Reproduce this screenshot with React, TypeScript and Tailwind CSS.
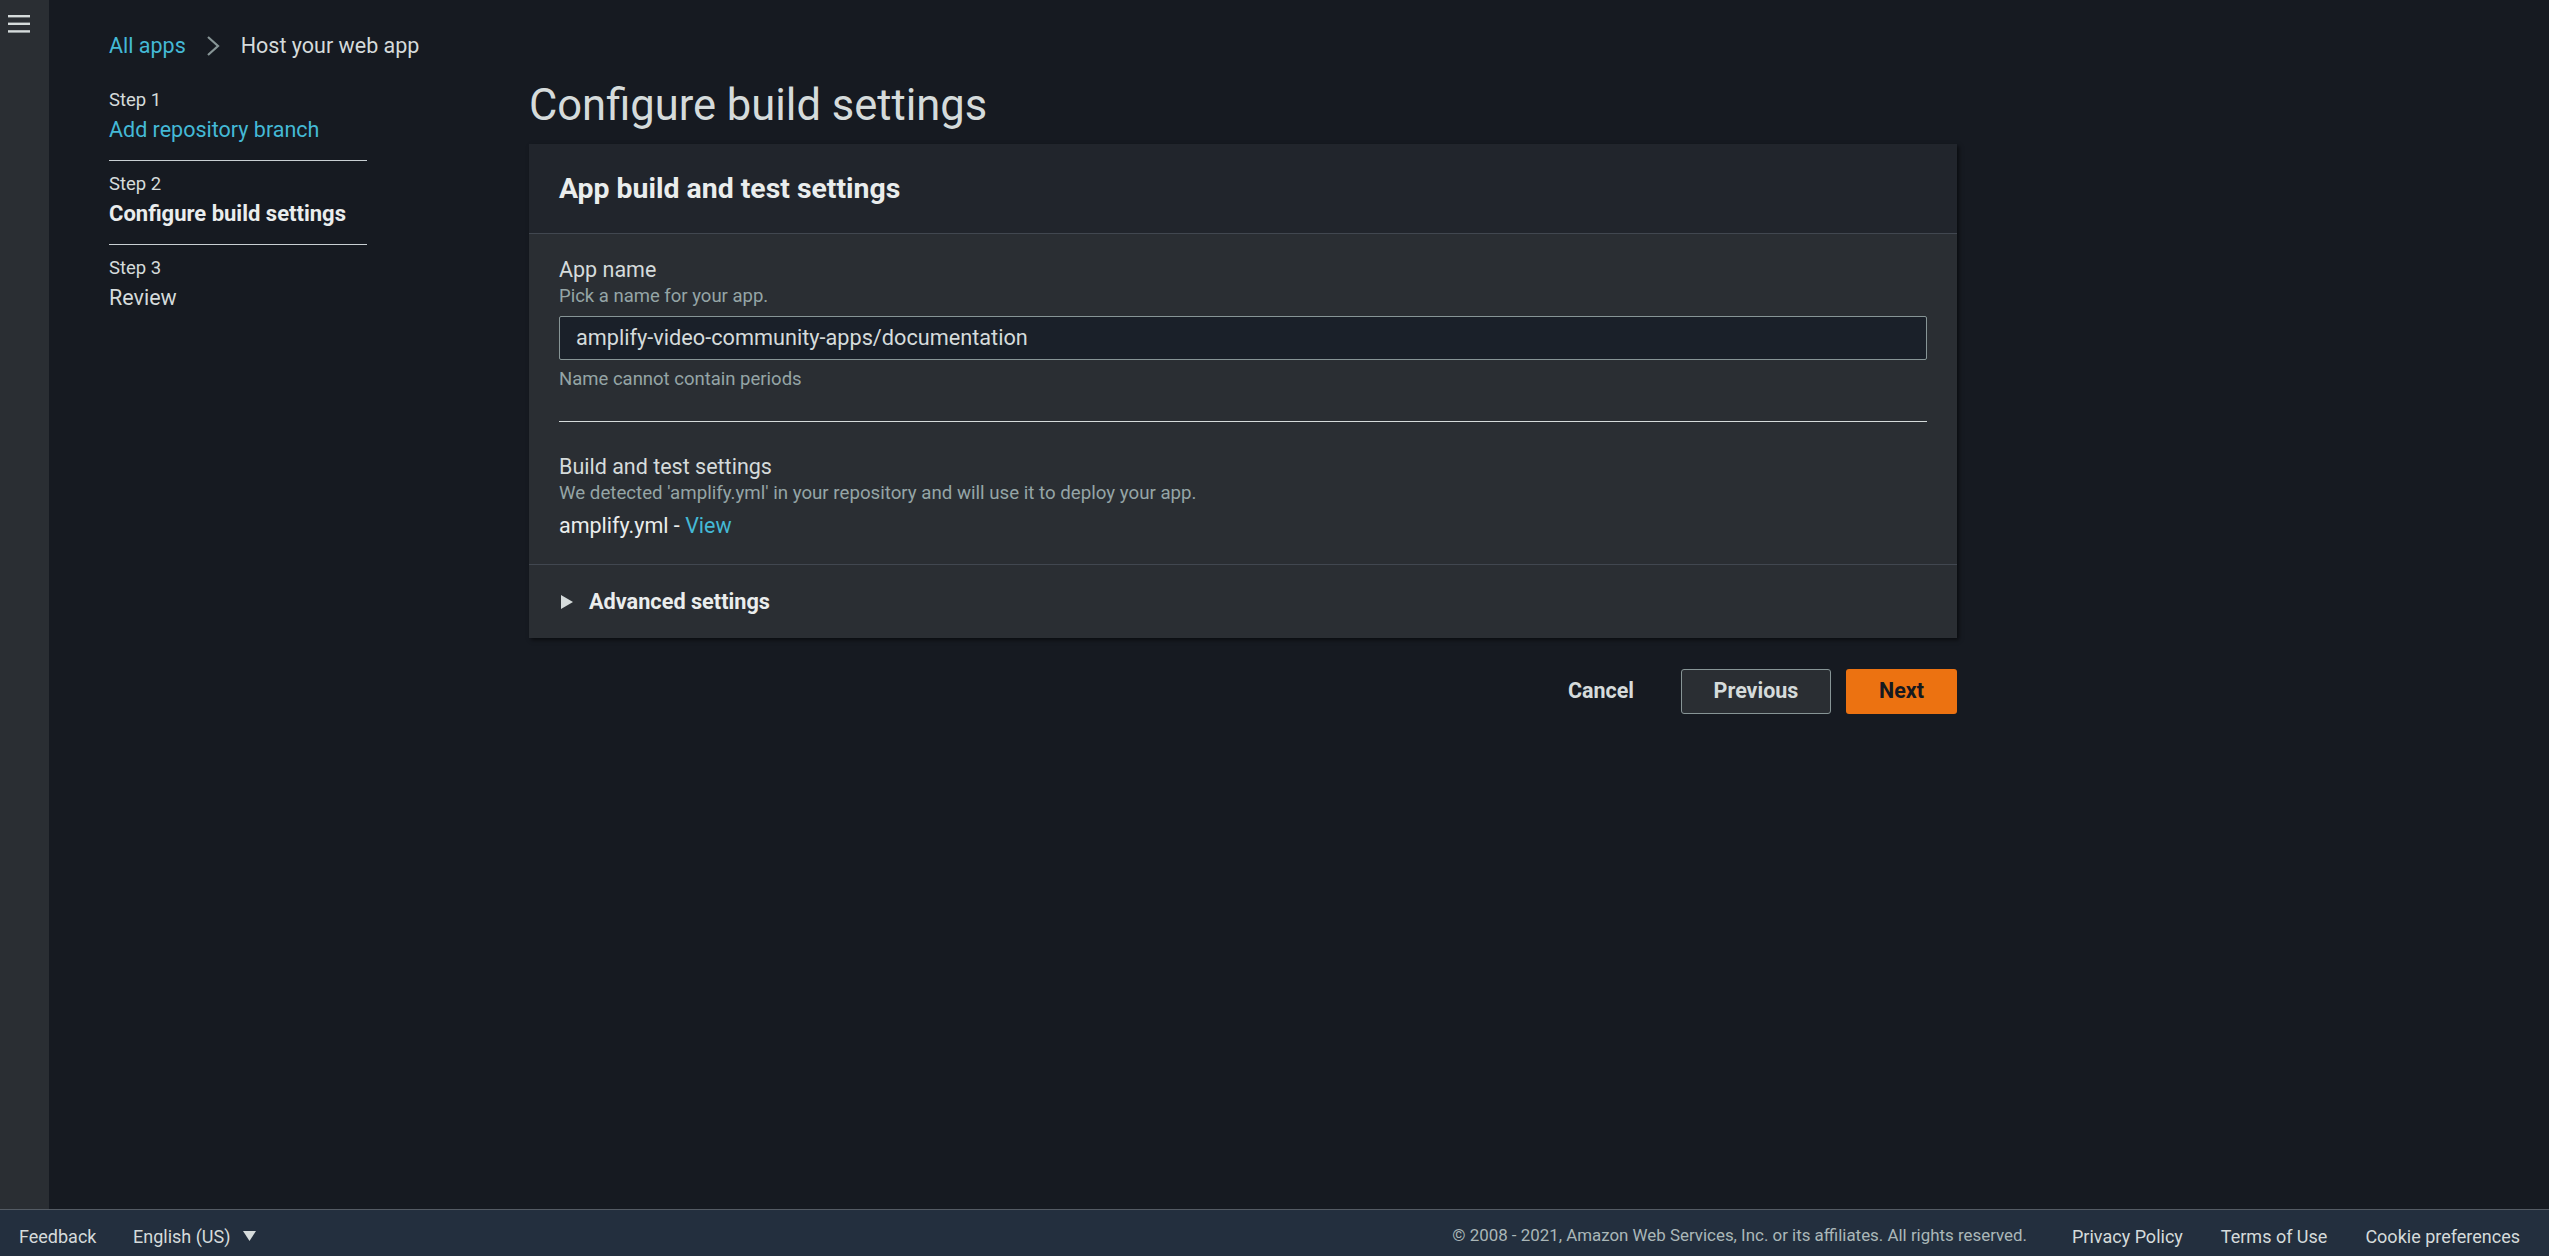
import React from "react";

function Hamburger() {
  return (
    <svg width="22" height="19" viewBox="0 0 22 19" className="block">
      <rect x="0" y="0" width="22" height="2.4" fill="#d5dbdb" />
      <rect x="0" y="7.6" width="22" height="2.4" fill="#d5dbdb" />
      <rect x="0" y="15.2" width="22" height="2.4" fill="#d5dbdb" />
    </svg>
  );
}

function Chevron() {
  return (
    <svg width="14" height="22" viewBox="0 0 14 22" className="block">
      <polyline points="2,2 12,11 2,20" fill="none" stroke="#879596" strokeWidth="2.2" />
    </svg>
  );
}

function StepItem({
  label,
  title,
  kind,
  border,
}: {
  label: string;
  title: string;
  kind: "link" | "active" | "plain";
  border: boolean;
}) {
  return (
    <li className={"pt-[8px] pb-[15px] " + (border ? "border-b border-[#c9cfd3]" : "")}>
      <div className="text-[18.5px] leading-[30px] text-[#d5dbdb]">{label}</div>
      {kind === "link" && (
        <a className="block text-[21.5px] leading-[30px] text-[#44b9d6]">{title}</a>
      )}
      {kind === "active" && (
        <div className="text-[22px] font-bold leading-[30px] text-[#eaeded]">{title}</div>
      )}
      {kind === "plain" && (
        <div className="text-[21.5px] leading-[30px] text-[#d5dbdb]">{title}</div>
      )}
    </li>
  );
}

export default function App() {
  return (
    <div className="flex h-screen flex-col bg-[#161a21] font-['Roboto',sans-serif] text-[#d5dbdb]">
      <div className="flex min-h-0 flex-1">
        <aside className="w-[49px] shrink-0 bg-[#2a2e33] pl-[8px] pt-[15px]">
          <Hamburger />
        </aside>
        <main className="flex-1 pl-[60px]">
          <nav className="mt-[31px] flex h-[30px] items-center text-[21.5px] leading-[30px]">
            <a className="text-[#44b9d6]">All apps</a>
            <span className="ml-[20px] mr-[21px]">
              <Chevron />
            </span>
            <span className="text-[#d5dbdb]">Host your web app</span>
          </nav>

          <div className="mt-[16px] flex">
            <ol className="mr-[162px] w-[258px] shrink-0">
              <StepItem label="Step 1" title="Add repository branch" kind="link" border />
              <StepItem label="Step 2" title="Configure build settings" kind="active" border />
              <StepItem label="Step 3" title="Review" kind="plain" border={false} />
            </ol>

            <section className="w-[1428px] shrink-0 pt-[1px]">
              <h1 className="text-[43.5px] font-normal leading-[56px] text-[#d5dbdb]">
                Configure build settings
              </h1>

              <div className="mt-[10px] bg-[#2a2e33] shadow-[2px_2px_4px_0_rgba(0,0,0,0.55)]">
                <div className="h-[90px] border-b border-[#414750] bg-[#21252c] px-[30px] pt-[27px]">
                  <h2 className="text-[28.4px] font-bold leading-[36px] text-[#eaeded]">
                    App build and test settings
                  </h2>
                </div>

                <div className="px-[30px] pb-[24px] pt-[22px]">
                  <div className="text-[21.5px] leading-[28px] text-[#d5dbdb]">App name</div>
                  <div className="text-[18.5px] leading-[24px] text-[#95a5a6]">
                    Pick a name for your app.
                  </div>
                  <div className="mt-[8px] flex h-[44px] items-center rounded-[2px] border border-[#879596] bg-[#1a2029] px-[16px] text-[21.7px] text-[#d5dbdb]">
                    amplify-video-community-apps/documentation
                  </div>
                  <div className="mt-[7px] text-[18.5px] leading-[24px] text-[#95a5a6]">
                    Name cannot contain periods
                  </div>

                  <div className="mt-[30px] h-px bg-[#d5dbdb]" />

                  <div className="mt-[31px] text-[21.5px] leading-[28px] text-[#d5dbdb]">
                    Build and test settings
                  </div>
                  <div className="text-[18.7px] leading-[24px] text-[#95a5a6]">
                    We detected 'amplify.yml' in your repository and will use it to deploy your app.
                  </div>
                  <div className="mt-[7px] text-[21.5px] leading-[28px] text-[#eaeded]">
                    amplify.yml - <a className="text-[#44b9d6]">View</a>
                  </div>
                </div>

                <div className="flex h-[74px] items-center border-t border-[#414750] px-[30px] pt-[1px]">
                  <svg width="13" height="14" viewBox="0 0 13 14" className="ml-[2px] block">
                    <polygon points="0,0 12,7 0,14" fill="#d5dbdb" />
                  </svg>
                  <span className="ml-[15px] text-[21.7px] font-bold leading-[28px] text-[#eaeded]">
                    Advanced settings
                  </span>
                </div>
              </div>

              <div className="mt-[31px] flex justify-end gap-[15px]">
                <button className="flex h-[45px] w-[130px] items-center justify-center text-[21.5px] font-bold text-[#d5dbdb]">
                  Cancel
                </button>
                <button className="flex h-[45px] w-[150px] items-center justify-center rounded-[3px] border border-[#879596] bg-[#2a2e33] text-[21.5px] font-bold text-[#d5dbdb]">
                  Previous
                </button>
                <button className="flex h-[45px] w-[111px] items-center justify-center rounded-[3px] bg-[#ec7211] text-[21.5px] font-bold text-[#16191f]">
                  Next
                </button>
              </div>
            </section>
          </div>
        </main>
      </div>

      <footer className="flex h-[47px] shrink-0 items-center border-t border-[#545b64] bg-[#232f3e] pt-[6px] text-[18px] text-[#d5dbdb]">
        <span className="ml-[19px] w-[114px]">Feedback</span>
        <span>English (US)</span>
        <svg width="13" height="10" viewBox="0 0 13 10" className="ml-[12px] block">
          <polygon points="0,0 13,0 6.5,10" fill="#d5dbdb" />
        </svg>
        <div className="ml-auto flex items-center pr-[29px]">
          <span className="text-[16.9px] text-[#aab7b8]">
            © 2008 - 2021, Amazon Web Services, Inc. or its affiliates. All rights reserved.
          </span>
          <a className="ml-[45px]">Privacy Policy</a>
          <a className="ml-[38px]">Terms of Use</a>
          <a className="ml-[38px]">Cookie preferences</a>
        </div>
      </footer>
    </div>
  );
}
